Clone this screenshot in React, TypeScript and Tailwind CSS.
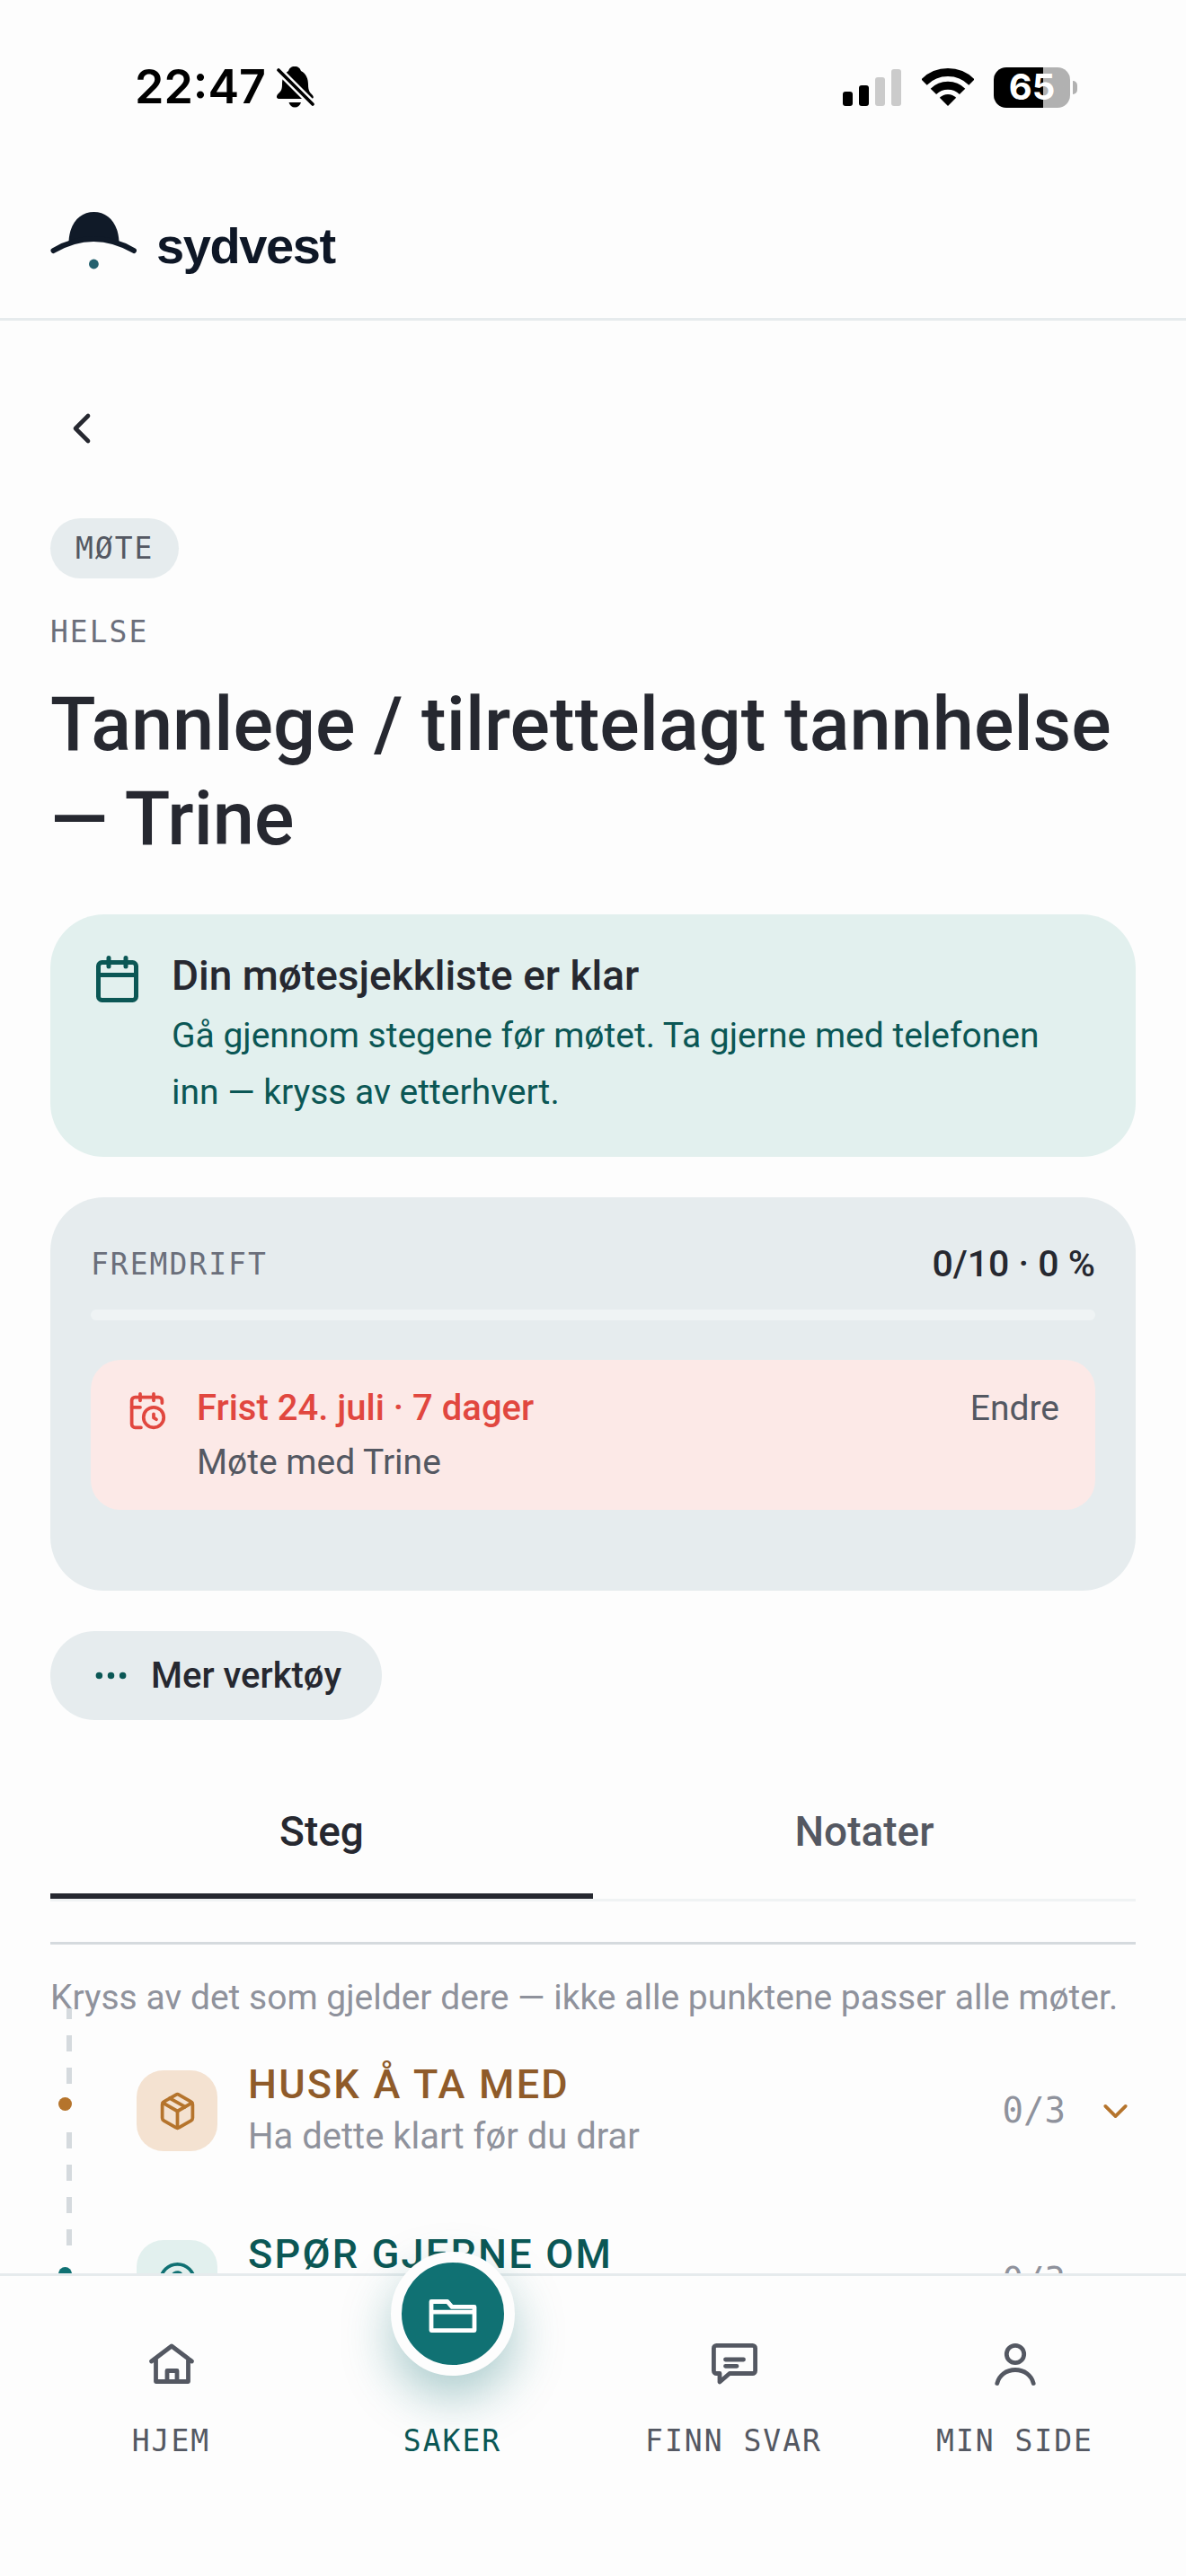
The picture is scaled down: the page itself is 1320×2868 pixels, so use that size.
import { useState } from 'react'
import type { ReactNode } from 'react'
import { CalendarClock, ChevronDown, ChevronLeft, CircleHelp, Ellipsis, Package } from 'lucide-react'

type Step = {
  title: string
  text?: string
  count: string
  icon: ReactNode
  titleColor: string
  iconBox: string
  dot: string
  chevron: string
}

const steps: Step[] = [
  {
    title: 'HUSK Å TA MED',
    text: 'Ha dette klart før du drar',
    count: '0/3',
    icon: <Package className="size-[45px]" />,
    titleColor: 'text-[#8f5b2a]',
    iconBox: 'bg-[#f4e2d1] text-[#b5742c]',
    dot: 'bg-[#b5742c]',
    chevron: 'text-[#b5742c]',
  },
  {
    title: 'SPØR GJERNE OM',
    count: '0/3',
    icon: <CircleHelp className="size-[45px]" />,
    titleColor: 'text-[#0b5755]',
    iconBox: 'bg-[#e2f0ee] text-[#107173]',
    dot: 'bg-[#107173]',
    chevron: 'text-[#107173]',
  },
]

const tabs = ['Steg', 'Notater']

function BellOff() {
  return (
    <svg viewBox="0 0 42 46" className="h-[46px] w-[42px]" aria-hidden="true">
      <path d="M20 0C24 0 26 2 27 5C33 8 35 14 35 20C35 27 37 29 39 31C42 34 41 36 38 36H3C0 36-1 34 1 31C4 28 6 27 6 20C6 13 8 8 13 5C14 2 16 0 20 0Z" />
      <path d="M13.5 40H27C26 43.500 23.500 45.500 20.200 45.500S14.500 43.500 13.500 40Z" />
      <path d="M0 2L41 43" stroke="#fdfdfd" strokeWidth="8.500" />
      <path d="M2 4L40 42" stroke="#000" strokeWidth="3.6" strokeLinecap="round" />
    </svg>
  )
}

function Signal() {
  return (
    <svg viewBox="0 0 66 41" className="h-[41px] w-[66px]" aria-hidden="true">
      <rect y="25" width="11" height="16" rx="3" />
      <rect x="18" y="18" width="11" height="23" rx="3" />
      <rect x="36" y="9" width="11" height="32" rx="3" fill="#cbcbcb" />
      <rect x="54" width="11" height="41" rx="3" fill="#cbcbcb" />
    </svg>
  )
}

function Wifi() {
  return (
    <svg viewBox="0 0 58 42" className="h-[42px] w-[58px]" aria-hidden="true">
      <g fill="none" stroke="#000" strokeWidth="9">
        <path d="M2.500 15.500A37.500 37.500 0 0 1 55.500 15.500" />
        <path d="M12.900 25.900A22.800 22.800 0 0 1 45.100 25.900" />
      </g>
      <path d="M29 42L19.800 32.800A13 13 0 0 1 38.200 32.800Z" />
    </svg>
  )
}

function Battery() {
  return (
    <div className="flex items-center gap-[3px]">
      <div className="flex h-[45px] w-[85px] items-center justify-center rounded-[14px] bg-linear-to-r from-black from-65% to-[#b1b1b1] to-65% text-[40px] leading-none font-bold text-white">
        65
      </div>
      <div className="h-[15px] w-[5px] rounded-r-full bg-[#b1b1b1]" />
    </div>
  )
}

function HatLogo() {
  return (
    <svg viewBox="0 0 96 76" className="h-[76px] w-24" aria-hidden="true">
      <path d="M20.500 33C21.500 12 33 0 48.500 0S75.500 12 76.500 33Q48.500 28 20.500 33Z" fill="#101a28" />
      <path d="M3.500 43Q48 17 93 43" fill="none" stroke="#101a28" strokeWidth="6" strokeLinecap="round" />
      <circle cx="48.400" cy="58" r="5.400" fill="#23606e" />
    </svg>
  )
}

function CalendarIcon() {
  return (
    <svg viewBox="0 0 60 60" className="size-[60px] shrink-0" fill="none" stroke="#0b5755" strokeWidth="5" strokeLinecap="round" strokeLinejoin="round" aria-hidden="true">
      <rect x="8.500" y="13.500" width="42" height="42" rx="4" />
      <path d="M8.500 27.500H50.500M20 8.500V18M39 8.500V18" />
    </svg>
  )
}

function NavIcon({ children }: { children: ReactNode }) {
  return (
    <svg viewBox="0 0 60 60" className="size-[60px]" fill="none" stroke="currentColor" strokeWidth="4.800" strokeLinecap="round" strokeLinejoin="round" aria-hidden="true">
      {children}
    </svg>
  )
}

const navItems = [
  {
    label: 'HJEM',
    active: false,
    icon: (
      <NavIcon>
        <path d="M7.500 28L30 11L52.500 28M12.500 25V50.500H48.500V25M25 50.500V38.500H36V50.500" />
      </NavIcon>
    ),
  },
  {
    label: 'SAKER',
    active: true,
    icon: (
      <NavIcon>
        <path d="M6 16.500H24L29 22.400H54V48.600H6ZM6 28.200H54" />
      </NavIcon>
    ),
  },
  {
    label: 'FINN SVAR',
    active: false,
    icon: (
      <NavIcon>
        <path d="M13 41.500H10.500A3 3 0 0 1 7.400 38.500V13.500A3 3 0 0 1 10.500 10.400H50.500A3 3 0 0 1 53.600 13.500V38.500A3 3 0 0 1 50.500 41.500H25L14 51V41.500M20.500 26H40.500M20.500 33.300H33" />
      </NavIcon>
    ),
  },
  {
    label: 'MIN SIDE',
    active: false,
    icon: (
      <NavIcon>
        <circle cx="30" cy="20" r="9.700" />
        <path d="M9.800 52.500C12 43.500 20 37.500 30 37.500S48 43.500 50.200 52.500" />
      </NavIcon>
    ),
  },
]

export default function App() {
  const [activeTab, setActiveTab] = useState('Steg')

  return (
    <div className="flex h-screen flex-col bg-[#fdfdfd] font-['Roboto',sans-serif] text-[#262830]">
      {/* Status bar */}
      <div className="flex h-[194px] shrink-0 items-center justify-between pr-[121px] pl-[150px] font-['Inter',sans-serif] text-black">
        <div className="flex items-center gap-3">
          <span className="text-[52px] leading-none font-semibold">22:47</span>
          <BellOff />
        </div>
        <div className="flex items-center gap-[22px]">
          <Signal />
          <Wifi />
          <Battery />
        </div>
      </div>

      <header className="flex h-[163px] shrink-0 items-center gap-[22px] border-b-[3px] border-[#e6ebed] px-14">
        <HatLogo />
        <span className="font-['Liberation_Sans',sans-serif] text-[56px] leading-none font-bold tracking-tight text-[#0e1726]">sydvest</span>
      </header>

      <main className="min-h-0 flex-1 overflow-hidden px-14 pt-[60px]">
        <button aria-label="Tilbake" className="flex h-30 w-[70px] items-center justify-center">
          <ChevronLeft className="size-14" />
        </button>

        <div className="mt-10 flex font-['DejaVu_Sans_Mono',monospace] text-[33px] tracking-[2px]">
          <span className="flex h-[67px] items-center rounded-full bg-[#e6ecee] px-7 text-[#545862]">MØTE</span>
        </div>
        <p className="mt-10 font-['DejaVu_Sans_Mono',monospace] text-[33px] leading-[40px] tracking-[2px] text-[#6b6f7b]">HELSE</p>
        <h1 className="mt-[30px] text-[83px] leading-[105px] font-medium">Tannlege / tilrettelagt tannhelse — Trine</h1>

        <section className="mt-[54px] flex gap-[30px] rounded-[60px] bg-[#e2f0ee] px-[45px] py-10">
          <CalendarIcon />
          <div className="flex-1 pr-4">
            <h2 className="text-[46px] leading-[56px] font-medium">Din møtesjekkliste er klar</h2>
            <p className="mt-2 text-[39px] leading-[63px] text-[#0b5755]">
              Gå gjennom stegene før møtet. Ta gjerne med telefonen inn — kryss av etterhvert.
            </p>
          </div>
        </section>

        <section className="mt-[45px] rounded-[60px] bg-[#e6ecee] px-[45px] pt-12 pb-[90px]">
          <div className="flex h-[54px] items-center justify-between">
            <span className="font-['DejaVu_Sans_Mono',monospace] text-[33px] tracking-[2px] text-[#6b6f7b]">FREMDRIFT</span>
            <span className="text-[41px] font-medium">0/10 · 0 %</span>
          </div>
          <div role="progressbar" aria-valuenow={0} aria-valuemin={0} aria-valuemax={10} className="mt-[23px] h-3 rounded-full bg-[#eff3f4]" />
          <div className="mt-11 flex items-start rounded-[33px] bg-[#fce9e7] px-10 pt-6 pb-[23px] text-[39px] leading-[60px]">
            <CalendarClock className="mt-[10px] size-[45px] shrink-0 text-[#e1473f]" />
            <div className="ml-[33px] flex-1">
              <p className="text-[40px] font-medium text-[#e1473f]">Frist 24. juli · 7 dager</p>
              <p className="text-[#545862]">Møte med Trine</p>
            </div>
            <button className="text-[#545862]">Endre</button>
          </div>
        </section>

        <button className="mt-[45px] flex h-[99px] items-center gap-[22px] rounded-full bg-[#e6ecee] px-[45px] text-[40px] font-medium">
          <Ellipsis className="size-[45px] text-[#0b5755]" />
          Mer verktøy
        </button>

        <div role="tablist" className="mt-14 grid grid-cols-2 border-b-[3px] border-[#f0f3f4]">
          {tabs.map((tab) => (
            <button
              key={tab}
              role="tab"
              aria-selected={activeTab === tab}
              onClick={() => setActiveTab(tab)}
              className={`h-[143px] border-b-[6px] text-[46px] font-medium ${
                activeTab === tab ? 'border-[#262830]' : 'border-transparent text-[#545862]'
              }`}
            >
              {tab}
            </button>
          ))}
        </div>

        <hr className="mt-[45px] border-t-[3px] border-[#d5dade]" />
        <p className="mt-[29px] text-[39px] leading-[60px] text-[#8f929c]">
          Kryss av det som gjelder dere — ikke alle punktene passer alle møter.
        </p>

        <div className="relative flex flex-col gap-[75px] pt-[39px]">
          {/* Dashed timeline */}
          <div className="absolute -top-[18px] bottom-0 left-[18px] w-[6px] bg-[repeating-linear-gradient(to_bottom,#d5dade_0px_12px,transparent_12px_30px,#d5dade_30px_36px)]" />
          {steps.map((step) => (
            <button key={step.title} className="relative flex h-[114px] items-center pl-24 text-left">
              <span className={`absolute top-[42px] left-[9px] size-[15px] rounded-full ring-[9px] ring-[#fdfdfd] ${step.dot}`} />
              <span className={`flex size-[90px] items-center justify-center rounded-[30px] ${step.iconBox}`}>{step.icon}</span>
              <span className="ml-[34px] flex flex-1 flex-col self-start">
                <span className={`text-[45px] leading-[56px] font-medium tracking-wider ${step.titleColor}`}>{step.title}</span>
                {step.text && <span className="text-[40px] leading-[60px] text-[#8f929c]">{step.text}</span>}
              </span>
              <span className="mr-[33px] font-['DejaVu_Sans_Mono',monospace] text-[39px] text-[#8f929c]">{step.count}</span>
              <ChevronDown className={`size-[45px] ${step.chevron}`} />
            </button>
          ))}
        </div>
      </main>

      <nav className="relative grid h-[337px] shrink-0 grid-cols-4 border-t-[3px] border-[#e6ebed] bg-[#fdfdfd] px-[34px] pt-[67px] font-['DejaVu_Sans_Mono',monospace] text-[33px] tracking-[2px]">
        {navItems.map((item) => (
          <a
            key={item.label}
            href="#"
            className={`relative flex flex-col items-center gap-[33px] ${item.active ? 'text-[#0b5755]' : 'text-[#545862]'}`}
          >
            {item.active ? (
              <>
                <span className="absolute -top-[94px] flex size-[138px] items-center justify-center rounded-full border-12 border-[#fdfdfd] bg-[#107173] text-white shadow-[0_24px_54px_rgba(16,113,115,0.35)]">
                  {item.icon}
                </span>
                <span className="size-[60px]" />
              </>
            ) : (
              item.icon
            )}
            <span className="leading-[48px] whitespace-nowrap">{item.label}</span>
          </a>
        ))}
      </nav>
    </div>
  )
}
